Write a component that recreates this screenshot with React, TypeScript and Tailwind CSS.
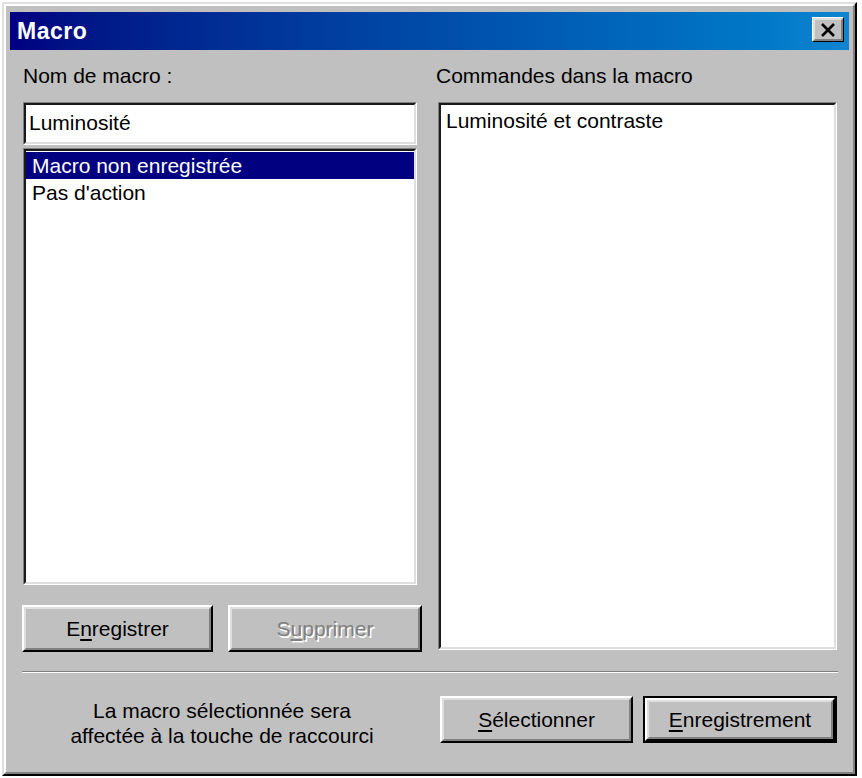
import React from "react";

// Classic raised 3D button
function Button({
  children,
  width,
  isDefault,
  disabled,
}: {
  children: React.ReactNode;
  width: string;
  isDefault?: boolean;
  disabled?: boolean;
}) {
  const inner = (
    <div className="h-full w-full border-2 border-t-white border-l-white border-b-black border-r-black">
      <div className="h-full w-full border-2 border-t-[#dfdfdf] border-l-[#dfdfdf] border-b-[#808080] border-r-[#808080] flex items-center justify-center">
        <span
          className={
            disabled
              ? "text-[#808080] [text-shadow:1.5px_1.5px_0_#ffffff]"
              : "text-black"
          }
        >
          {children}
        </span>
      </div>
    </div>
  );

  if (isDefault) {
    return (
      <div className={`${width} h-[47px] border-2 border-black`}>{inner}</div>
    );
  }
  return <div className={`${width} h-[47px]`}>{inner}</div>;
}

// Sunken field (edit / listbox)
function Sunken({
  className,
  children,
}: {
  className: string;
  children?: React.ReactNode;
}) {
  return (
    <div
      className={`${className} border border-t-[#808080] border-l-[#808080] border-b-white border-r-white`}
    >
      <div className="h-full w-full border-2 border-t-[#1a1a1a] border-l-[#1a1a1a] border-b-[#dfdfdf] border-r-[#dfdfdf] bg-white overflow-hidden">
        {children}
      </div>
    </div>
  );
}

export default function App() {
  return (
    <div className="w-[862px] h-[778px] bg-white pt-[2px] pl-[2px] font-['Liberation_Sans',Arial,sans-serif] text-[21px] leading-[24px] text-black">
      {/* Window frame */}
      <div className="w-[855px] h-[774px] bg-[#c0c0c0] border-2 border-t-[#dfdfdf] border-l-[#dfdfdf] border-b-black border-r-black">
        <div className="h-full w-full border-2 border-t-white border-l-white border-b-[#808080] border-r-[#808080] pt-[6px] px-[4px] flex flex-col">
          {/* Title bar */}
          <div className="h-[38px] bg-gradient-to-r from-[#000080] to-[#1084d0] flex items-start justify-between pl-[7px] pr-[5px]">
            <span className="text-white font-bold text-[23px] leading-[38px] tracking-[0.5px]">
              Macro
            </span>
            <div className="mt-[5px] w-[32px] h-[25px] border border-t-white border-l-white border-b-black border-r-black">
              <div className="h-full w-full border-2 border-t-[#dfdfdf] border-l-[#dfdfdf] border-b-[#808080] border-r-[#808080] bg-[#c0c0c0] flex items-center justify-center">
                <svg width="16" height="14" viewBox="0 0 16 14">
                  <path
                    d="M2 1 L14 13 M14 1 L2 13"
                    stroke="#000"
                    strokeWidth="2.6"
                    fill="none"
                  />
                </svg>
              </div>
            </div>
          </div>

          {/* Body */}
          <div className="flex flex-col pl-[12px]">
            <div className="flex">
              {/* Left column */}
              <div className="w-[400px] flex flex-col">
                <div className="mt-[14px] h-[24px] pl-[1px]">Nom de macro :</div>
                <Sunken className="mt-[14px] ml-[1px] w-[394px] h-[43px]">
                  <div className="pl-[3px] pt-[6px]">Luminosité</div>
                </Sunken>
                <Sunken className="mt-[3px] ml-[1px] w-[394px] h-[437px]">
                  <div className="pt-[1px]">
                    <div className="h-[27px] bg-[#000080] text-white pl-[6px] leading-[27px]">
                      Macro non enregistrée
                    </div>
                    <div className="h-[27px] pl-[6px] leading-[27px]">
                      Pas d'action
                    </div>
                  </div>
                </Sunken>
                <div className="mt-[20px] flex gap-[15px]">
                  <Button width="w-[191px]">
                    E<span className="underline underline-offset-[3px]">n</span>registrer
                  </Button>
                  <Button width="w-[194px]" disabled>
                    S<span className="underline underline-offset-[3px]">u</span>pprimer
                  </Button>
                </div>
              </div>

              {/* Right column */}
              <div className="ml-[14px] flex flex-col">
                <div className="mt-[14px] h-[24px]">Commandes dans la macro</div>
                <Sunken className="mt-[14px] ml-[2px] w-[399px] h-[548px]">
                  <div className="pl-[5px] pt-[4px]">Luminosité et contraste</div>
                </Sunken>
              </div>
            </div>

            {/* Separator */}
            <div className="mt-[19px] w-[816px] border-t border-b border-t-[#808080] border-b-white" />

            {/* Bottom row */}
            <div className="mt-[23px] flex items-start">
              <div className="w-[400px] text-center leading-[25px] mt-[2px]">
                <div>La macro sélectionnée sera</div>
                <div>affectée à la touche de raccourci</div>
              </div>
              <div className="ml-[18px] flex gap-[10px]">
                <Button width="w-[193px]">
                  <span className="underline underline-offset-[3px]">S</span>électionner
                </Button>
                <Button width="w-[194px]" isDefault>
                  <span className="underline underline-offset-[3px]">E</span>nregistrement
                </Button>
              </div>
            </div>
          </div>
        </div>
      </div>
    </div>
  );
}
